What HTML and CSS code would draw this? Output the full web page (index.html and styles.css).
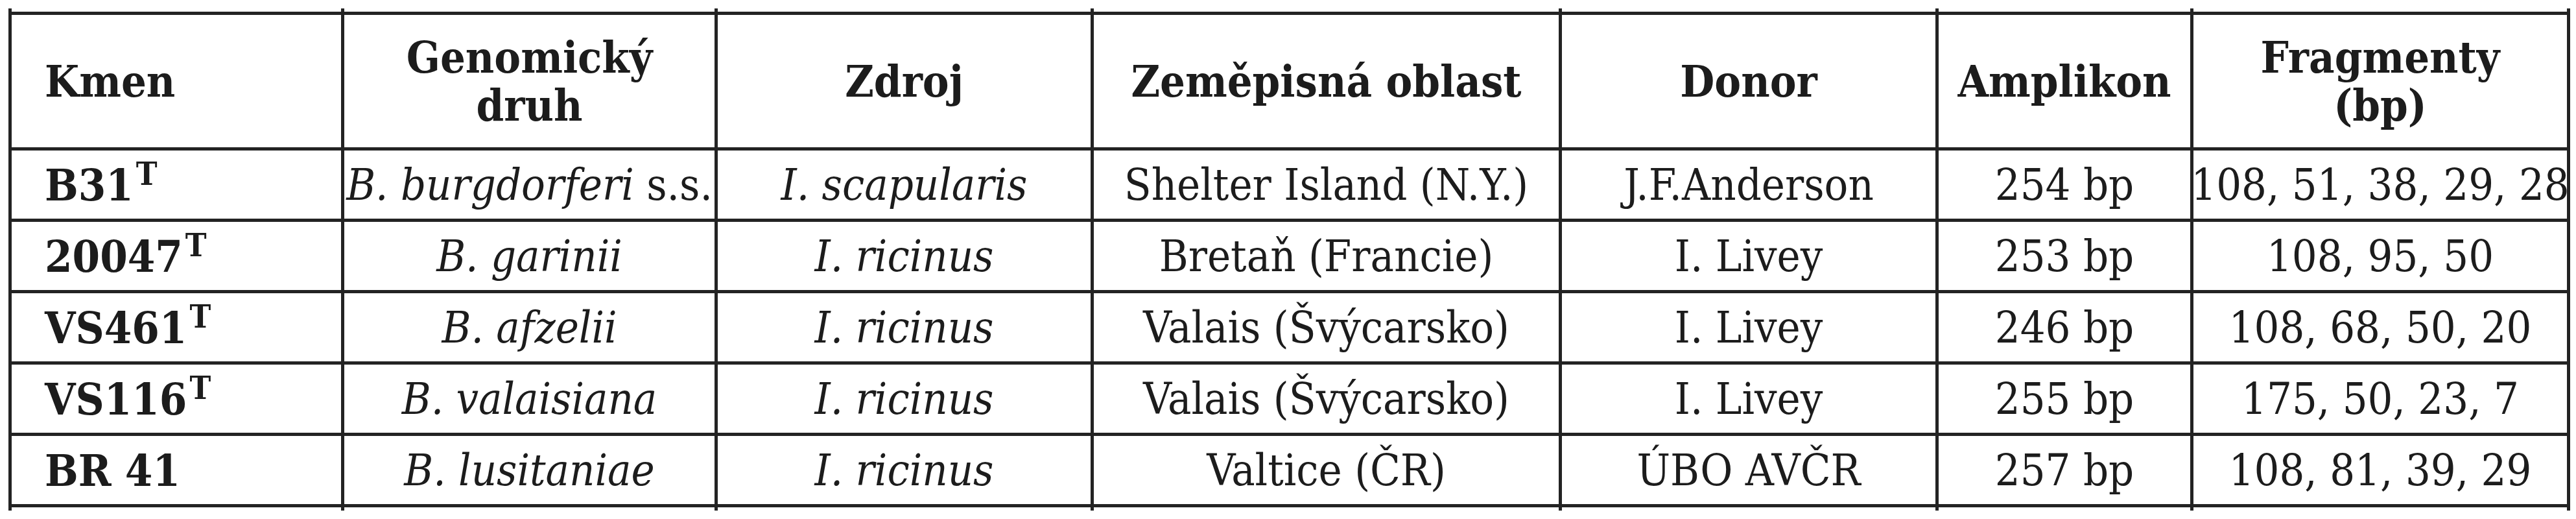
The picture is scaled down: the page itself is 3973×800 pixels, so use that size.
FILE: index.html
```html
<!DOCTYPE html>
<html lang="cs">
<head>
<meta charset="utf-8">
<title>Kmeny Borrelia</title>
<link rel="stylesheet" href="styles.css">
</head>
<body>
<div class="tbl" role="table">
  <div class="row tick"><div></div><div></div><div></div><div></div><div></div><div></div><div></div></div>
  <div class="row head" role="row">
    <div class="c first" role="columnheader">Kmen</div>
    <div class="c" role="columnheader">Genomický<br>druh</div>
    <div class="c" role="columnheader">Zdroj</div>
    <div class="c" role="columnheader">Zeměpisná oblast</div>
    <div class="c" role="columnheader">Donor</div>
    <div class="c" role="columnheader">Amplikon</div>
    <div class="c" role="columnheader">Fragmenty<br>(bp)</div>
  </div>
  <div class="row" role="row">
    <div class="c first" role="cell"><span>B31<span class="sup">T</span></span></div>
    <div class="c" role="cell"><span><i>B. burgdorferi</i> s.s.</span></div>
    <div class="c" role="cell"><i>I. scapularis</i></div>
    <div class="c" role="cell">Shelter Island (N.Y.)</div>
    <div class="c" role="cell">J.F.Anderson</div>
    <div class="c" role="cell">254 bp</div>
    <div class="c" role="cell">108, 51, 38, 29, 28</div>
  </div>
  <div class="row" role="row">
    <div class="c first" role="cell"><span>20047<span class="sup">T</span></span></div>
    <div class="c" role="cell"><i>B. garinii</i></div>
    <div class="c" role="cell"><i>I. ricinus</i></div>
    <div class="c" role="cell">Bretaň (Francie)</div>
    <div class="c" role="cell">I. Livey</div>
    <div class="c" role="cell">253 bp</div>
    <div class="c" role="cell">108, 95, 50</div>
  </div>
  <div class="row" role="row">
    <div class="c first" role="cell"><span>VS461<span class="sup">T</span></span></div>
    <div class="c" role="cell"><i>B. afzelii</i></div>
    <div class="c" role="cell"><i>I. ricinus</i></div>
    <div class="c" role="cell">Valais (Švýcarsko)</div>
    <div class="c" role="cell">I. Livey</div>
    <div class="c" role="cell">246 bp</div>
    <div class="c" role="cell">108, 68, 50, 20</div>
  </div>
  <div class="row" role="row">
    <div class="c first" role="cell"><span>VS116<span class="sup">T</span></span></div>
    <div class="c" role="cell"><i>B. valaisiana</i></div>
    <div class="c" role="cell"><i>I. ricinus</i></div>
    <div class="c" role="cell">Valais (Švýcarsko)</div>
    <div class="c" role="cell">I. Livey</div>
    <div class="c" role="cell">255 bp</div>
    <div class="c" role="cell">175, 50, 23, 7</div>
  </div>
  <div class="row" role="row">
    <div class="c first" role="cell">BR 41</div>
    <div class="c" role="cell"><i>B. lusitaniae</i></div>
    <div class="c" role="cell"><i>I. ricinus</i></div>
    <div class="c" role="cell">Valtice (ČR)</div>
    <div class="c" role="cell">ÚBO AVČR</div>
    <div class="c" role="cell">257 bp</div>
    <div class="c" role="cell">108, 81, 39, 29</div>
  </div>
  <div class="row tick"><div></div><div></div><div></div><div></div><div></div><div></div><div></div></div>
</div>
</body>
</html>
```
FILE: styles.css
```css
html, body {
  margin: 0;
  background: #ffffff;
}
body {
  padding: 13px 0 0 13px;
  font-family: "DejaVu Serif Condensed", "DejaVu Serif", serif;
  font-stretch: condensed;
  font-size: 68px;
  color: #1c1c1c;
}
.tbl {
  display: grid;
  grid-template-columns: 508px 571px 575px 717px 576px 388px 576px;
  grid-template-rows: 5px 204px 105px 105px 105px 105px 105px 5px;
  gap: 5px;
  padding: 0 5px;
  background: #232323;
  width: max-content;
}
.row {
  display: contents;
}
.tick > div {
  background: #ffffff;
}
.c {
  background: #ffffff;
  display: flex;
  align-items: center;
  justify-content: center;
  text-align: center;
  white-space: nowrap;
  line-height: 74px;
}
.head .c {
  font-weight: bold;
}
.c.first {
  justify-content: flex-start;
  text-align: left;
  padding-left: 51px;
  font-weight: bold;
}
.sup {
  display: inline-block;
  font-size: 0.72em;
  line-height: 1;
  vertical-align: top;
  margin-top: -4px;
  margin-left: 4px;
}
.c i {
  font-style: italic;
}
```
